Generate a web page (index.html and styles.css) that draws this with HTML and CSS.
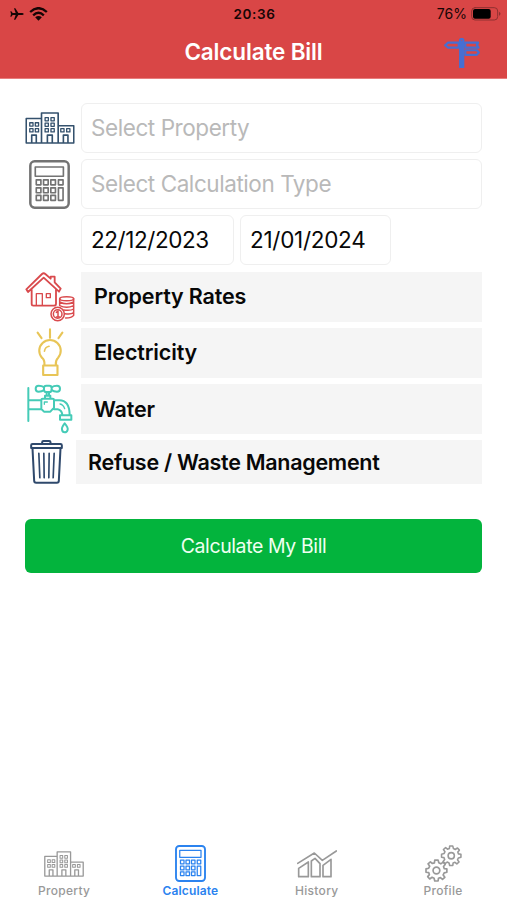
FILE: index.html
```html
<!DOCTYPE html>
<html lang="en">
<head>
<meta charset="utf-8">
<title>Calculate Bill</title>
<link rel="stylesheet" href="styles.css">
</head>
<body>
<svg class="defs" width="0" height="0" aria-hidden="true">
  <symbol id="buildings" viewBox="0 0 152 98">
    <path d="M3 95V20H48M50 95V3H101V95M103 42H149V95M3 95H149M20 94V71H34V94M68 94V71H83V94M117 94V71H131V94"/>
    <path class="fine" d="M14 33H24V43H14ZM31 33H41V43H31ZM14 51H24V61H14ZM31 51H41V61H31ZM61 17H71V27H61ZM79 17H89V27H79ZM61 34H71V44H61ZM79 34H89V44H79ZM61 51H71V61H61ZM79 51H89V61H79ZM109 51H119V61H109ZM127 51H137V61H127Z"/>
  </symbol>
  <symbol id="calculator" viewBox="0 0 124 148">
    <rect x="4" y="4" width="116" height="140" rx="13" class="outline"/>
    <path d="M19 21H104V49H19ZM22 60H36V75H22ZM44 60H58V75H44ZM66 60H80V75H66ZM89 60H103V75H89ZM22 84H36V99H22ZM44 84H58V99H44ZM66 84H80V99H66ZM22 107H36V122H22ZM44 107H58V122H44ZM66 107H80V122H66ZM89 84H103V122H89Z"/>
  </symbol>
</svg>
<header class="top">
  <div class="status">
    <div class="signals">
      <svg class="plane" viewBox="0 0 42 36"><path fill="currentColor" d="M41 18Q41 21 36 21H25L16 35H12L17 21H8L4 26H1L3 18L1 10H4L8 15H17L12 1H16L25 15H36Q41 15 41 18Z"/></svg>
      <svg class="wifi" viewBox="0 0 56 42"><path class="arc" d="M3 15Q28 -8 53 15M12 25Q28 10 44 25"/><path fill="currentColor" d="M18 31Q28 23 38 31L28 41Z"/></svg>
    </div>
    <span class="clock">20:36</span>
    <div class="power"><span class="percent">76%</span>
      <svg class="battery" viewBox="0 0 90 42"><rect class="shell" x="2" y="2" width="78" height="37" rx="10"/><rect x="6" y="6" width="53" height="29" rx="6"/><path d="M84 14Q93 20 84 27Z" fill="#8f3030"/></svg>
    </div>
  </div>
  <div class="nav">
    <h1>Calculate Bill</h1>
    <svg class="signpost" viewBox="0 0 108 94"><path d="M48 11V5L53 2L58 5V11M3 22L12 14H44V29H12ZM64 14H103L99 21L104 29H64ZM64 37H99L105 44L99 51H64ZM44 22H64"/><path class="pole" d="M53 8V91"/></svg>
  </div>
</header>
<main>
  <div class="row"><svg class="buildings navy" viewBox="0 0 152 98"><use href="#buildings"/></svg><div class="field placeholder"><span class="t-prop">Select Property</span></div></div>
  <div class="row"><svg class="calculator" viewBox="0 0 124 148"><use href="#calculator"/></svg><div class="field placeholder"><span class="t-type">Select Calculation Type</span></div></div>
  <div class="row dates"><div class="field"><span class="t-from">22/12/2023</span></div><div class="field"><span class="t-to">21/01/2024</span></div></div>
  <div class="row"><svg class="house" viewBox="0 0 150 150">
    <g stroke-width="5.5"><path d="M9 60L4 52L51 6Q56 1 61 6L77 20V14H89V31L107 50L102 59L56 17ZM20 53V97Q20 101 25 101H87Q93 101 93 95V53"/><path stroke-width="4" d="M34 99V65H52V99M64 65H76V77H64Z"/></g>
    <g stroke-width="4.5"><circle cx="98" cy="126" r="20"/><circle cx="98" cy="126" r="13"/><path d="M94 121L99 117V135M94 135H104"/><ellipse cx="125" cy="80" rx="21" ry="6"/><path d="M104 80V100M146 80V130Q140 138 122 138M104 90Q125 101 146 90M104 101Q125 111 146 101M116 114Q137 117 146 111M120 125Q137 128 146 122"/></g>
  </svg><div class="panel"><span class="t-rates">Property Rates</span></div></div>
  <div class="row"><svg class="bulb" viewBox="0 0 86 150"><path stroke-width="6.5" d="M5 14L17 31M43 4V30M81 14L69 31"/><path stroke-width="6.5" d="M26 113Q27 98 18 91A33 33 0 1 1 68 91Q60 98 61 113M22 115H66V144H22Z"/><path stroke-width="5" d="M26 71Q28 58 40 56"/></svg><div class="panel"><span class="t-elec">Electricity</span></div></div>
  <div class="row"><svg class="tap" viewBox="0 0 136 150"><path d="M3 12V111M5 49H42M5 76H42M46 44H76Q80 44 80 48V71L69 83H50L42 75V48Q42 44 46 44ZM53 44V35H69V44M58 35V25M65 35V25M50 10Q44 5 34 5A9 9 0 1 0 34 23Q44 23 50 18M73 10Q79 5 89 5A9 9 0 0 1 89 23Q79 23 73 18M80 49H96Q126 49 127 92M80 76H91Q103 78 105 92M98 94H132V107H98ZM112 118Q123 131 121 137Q119 145 112 145Q105 145 104 137Q102 131 112 118Z"/><rect x="50" y="5" width="23" height="19" rx="7"/><path d="M51 61V54H60M98 60Q108 62 112 74" stroke-width="4"/></svg><div class="panel"><span class="t-water">Water</span></div></div>
  <div class="row refuse"><svg class="bin" viewBox="0 0 98 132"><path d="M36 12V7Q36 3 40 3H57Q61 3 61 7V12M3 16Q3 12 7 12H91Q95 12 95 16V24H3ZM7 25L12 122Q12 128 18 128H80Q86 128 86 122L91 25"/><path class="bars" d="M26 40L29 113M41 40L42 113M57 40L56 113M72 40L69 113"/></svg><div class="panel"><span class="t-refuse">Refuse / Waste Management</span></div></div>
  <button type="button"><span>Calculate My Bill</span></button>
</main>
<nav class="tabs">
  <div class="tab"><div class="glyph"><svg class="buildings" viewBox="0 0 152 98"><use href="#buildings"/></svg></div><span>Property</span></div>
  <div class="tab active"><div class="glyph"><svg class="calculator" viewBox="0 0 124 148"><use href="#calculator"/></svg></div><span>Calculate</span></div>
  <div class="tab"><div class="glyph"><svg class="chart" viewBox="0 0 120 84"><path d="M2 40L52 9L76 31L118 3M5 80V55L34 36V80ZM43 80V33L54 25L69 41V80ZM78 80V46L102 28V80Z"/></svg></div><span>History</span></div>
  <div class="tab"><div class="glyph"><svg class="gears" viewBox="0 0 110 110"><defs><path id="gear" d="M-5 -31H5L7 -23L13 -20L20 -25L26 -18L21 -12L23 -6L31 -5V5L23 7L20 13L25 20L18 26L12 21L6 23L5 31H-5L-7 23L-13 20L-20 25L-26 18L-21 12L-23 6L-31 5V-5L-23 -7L-20 -13L-25 -20L-18 -26L-12 -21L-6 -23ZM10 0A10 10 0 1 0 -10 0A10 10 0 1 0 10 0Z"/></defs><use href="#gear" x="34" y="76"/><use href="#gear" transform="translate(78 32) scale(.93)"/></svg></div><span>Profile</span></div>
</nav>
</body>
</html>
```
FILE: styles.css
```css
* { box-sizing: border-box; }
body {
  margin: 0;
  width: 507px;
  height: 900px;
  display: flex;
  flex-direction: column;
  overflow: hidden;
  background: #fff;
  color: #080808;
  font-family: Inter, "Liberation Sans", sans-serif;
}
svg { display: block; flex: none; fill: none; stroke: currentColor; stroke-width: 5; stroke-linejoin: round; stroke-linecap: round; }
.defs { position: absolute; }
.top { height: 79px; flex: none; background: #d94646; border-bottom: 1px solid #e87d7d; }
.status { height: 27px; display: grid; grid-template-columns: 1fr auto 1fr; align-items: center; padding: 0 6px 0 10px; color: #170505; }
.status svg { stroke: none; }
.signals, .power { display: flex; align-items: center; }
.signals { gap: 5px; }
.plane { width: 14px; height: 12px; }
.wifi { width: 19px; height: 14px; }
.wifi .arc { stroke: currentColor; stroke-width: 7; stroke-linecap: butt; }
.clock { margin-right: 2px; font-size: 13.5px; font-weight: 600; letter-spacing: .6px; }
.power { justify-content: flex-end; gap: 4px; }
.percent { font-size: 14px; }
.battery { width: 30px; height: 14px; fill: #000; }
.battery .shell { fill: none; stroke: #8f3030; stroke-width: 3; }
.nav { height: 49px; display: grid; grid-template-columns: 1fr auto 1fr; align-items: center; padding: 0 27px; }
h1 { grid-column: 2; margin: 0; color: #fff; font-size: 22.5px; font-weight: 600; letter-spacing: -.15px; white-space: nowrap; }
.signpost { width: 36px; height: 31px; margin-top: 4px; justify-self: end; color: #466fd2; stroke-width: 6.5; }
.signpost .pole { stroke-width: 16; stroke-linecap: butt; }
main { display: flex; flex-direction: column; gap: 6px; padding: 24px 25px 0; }
.row { height: 50.2px; display: grid; grid-template-columns: 50px 401px; gap: 6px; align-items: center; }
.row > svg { justify-self: center; }
.field, .panel { height: 50px; display: flex; align-items: center; white-space: nowrap; }
.field { border: 1px solid #efefef; border-radius: 6px; padding: 0 0 1px 9px; font-size: 22.5px; letter-spacing: -.43px; }
.placeholder { color: #b9b9b9; }
.panel { background: #f5f5f5; padding: 0 0 1px 13px; font-size: 21.5px; font-weight: 600; letter-spacing: -.15px; }
.t-refuse { letter-spacing: -.28px; }
.dates { grid-template-columns: 153px 151px; padding-left: 56px; }
.t-to { letter-spacing: -.28px; }
.refuse { height: 44px; grid-template-columns: 43px 406px; gap: 8px; }
.refuse .panel { height: 44px; padding: 0 0 0 12px; }
.row .buildings { width: 50px; height: 32px; }
.navy { color: #34516d; }
.row .calculator { width: 41px; height: 49px; margin-right: 1px; color: #737373; }
.outline { stroke-width: 7.5; }
.fine { stroke-width: 4; }
.house { width: 50px; height: 50px; color: #d94a4d; }
.bulb { width: 28px; height: 49px; color: #e8c557; }
.tap { width: 46px; height: 50px; color: #45cbb7; stroke-width: 6; }
.bin { width: 33px; height: 44px; color: #2f496c; stroke-width: 6; }
.bin .bars { stroke-width: 5; }
button { height: 54px; margin: 29px 0 0; border: 0; border-radius: 6px; background: #03b43d; color: #effff1; font: 400 19.5px Inter, sans-serif; letter-spacing: -.4px; }
.tabs { margin-top: auto; height: 59px; flex: none; padding-left: 1px; display: grid; grid-template-columns: repeat(4, 126.3px); color: #999; }
.tab { display: flex; flex-direction: column; align-items: center; font-size: 12px; font-weight: 500; }
.tab > span { margin-top: 2px; line-height: 15px; letter-spacing: .3px; }
.glyph { height: 40px; display: flex; align-items: center; }
.active { color: #2b83ef; font-weight: 600; }
.active > span { letter-spacing: .15px; }
.tab .buildings { width: 40px; height: 26px; margin-top: 5px; }
.tab .calculator { width: 31px; height: 37px; margin-top: 4px; }
.chart { width: 40px; height: 28px; margin-top: 5px; }
.gears { width: 37px; height: 37px; margin-top: 4px; }
```
